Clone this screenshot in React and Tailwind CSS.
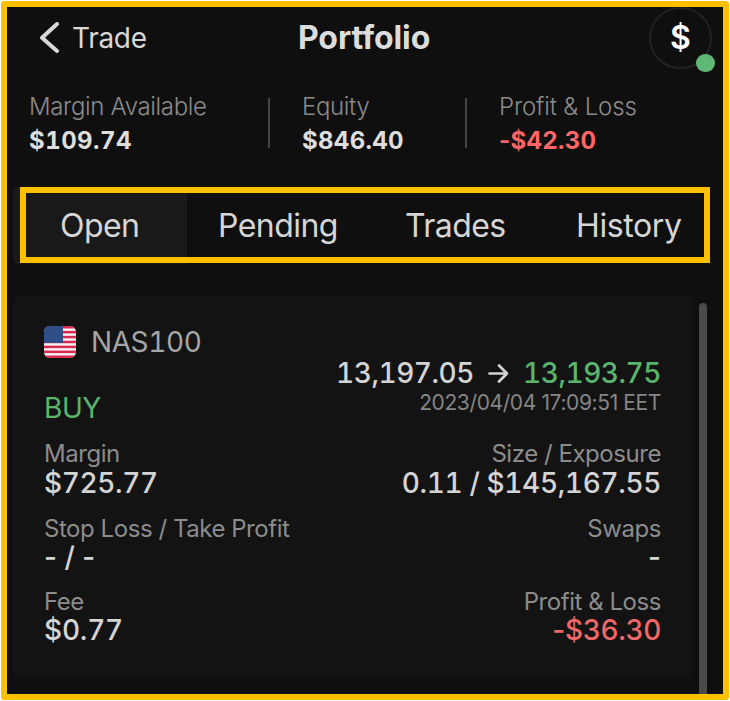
import React from "react";

function Stat({ label, value, negative, className, valueClass }) {
  return (
    <div className={"flex flex-col whitespace-nowrap text-[24px] leading-[34px] " + className}>
      <span className="font-light text-[#8c8c8c]">{label}</span>
      <span className={"font-bold " + valueClass}>
        {negative && "-"}
        <span className="tabular-nums">{value}</span>
      </span>
    </div>
  );
}

const LABEL = "text-[24px] leading-[30px] tracking-[-0.45px] text-[#8c8c8c]";
const VALUE = "text-[28px] font-[450] ";
const NUMBER = "leading-[28px] tracking-[-0.35px] tabular-nums text-[#d4d4d4]";

function Pair({ left, right, className }) {
  return (
    <div className={"flex justify-between whitespace-nowrap " + className}>
      <div className="flex flex-col">
        <span className={LABEL}>{left[0]}</span>
        <span className={VALUE + (left[2] || NUMBER)}>{left[1]}</span>
      </div>
      <div className="flex flex-col items-end">
        <span className={LABEL}>{right[0]}</span>
        <span className={VALUE + (right[2] || NUMBER)}>{right[1]}</span>
      </div>
    </div>
  );
}

function Flag() {
  return (
    <svg width="32" height="32" viewBox="0 0 32 32" className="mt-[26px] shrink-0">
      <clipPath id="flag">
        <rect width="32" height="32" rx="6" />
      </clipPath>
      <g clipPath="url(#flag)">
        <rect width="32" height="32" fill="#f4f0f2" />
        {[0, 1, 2, 3, 4, 5, 6].map((i) => (
          <rect key={i} y={i * 4.92} width="32" height="2.46" fill="#d9284f" />
        ))}
        <rect width="19" height="17" fill="#2f4d87" />
      </g>
    </svg>
  );
}

export default function App() {
  return (
    <div className="h-[701px] w-[730px] overflow-hidden bg-white pt-px pl-px font-['Inter','Liberation_Sans',sans-serif]">
      <div className="h-[699px] w-[728px] overflow-hidden rounded-[3px] border-[6px] border-[#ffc000] bg-[#0f0f0f]">
        <header className="flex h-[62px]">
          <svg width="22" height="32" viewBox="0 0 22 32" className="mt-[15px] ml-[32px] shrink-0" fill="none" stroke="#d8d8d8" strokeWidth="4" strokeLinecap="round" strokeLinejoin="round">
            <path d="M18 2 L3 15.700 L18 29" />
          </svg>
          <span className="mt-[14px] ml-[11px] w-[226px] shrink-0 text-[28px] leading-[34px] tracking-[-0.3px] text-[#d8d8d8]">Trade</span>
          <h1 className="mt-[14px] w-[351px] shrink-0 text-[32px] leading-[34px] font-bold tracking-[-0.1px] text-[#dcdcdc]">Portfolio</h1>
          <div className="relative h-[62px] w-[63px] shrink-0 rounded-full border-2 border-[#222] text-center text-[32px] leading-[58px] font-semibold text-white">
            $
            <span className="absolute top-[45px] left-[45px] h-[18px] w-[19px] rounded-full bg-[#5fb874]" />
          </div>
        </header>
        <section className="mt-[21px] flex h-[67px]">
          <Stat label="Margin Available" value="$109.74" className="w-[239px] pl-[22px] tracking-[-0.35px]" valueClass="tracking-[0.45px] text-[#dedede]" />
          <div className="mt-[8px] ml-[22px] h-[50px] w-[2px] bg-[#444]" />
          <Stat label="Equity" value="$846.40" className="w-[195px] pl-[32px] tracking-[-0.35px]" valueClass="tracking-[0.3px] text-[#dedede]" />
          <div className="mt-[8px] h-[50px] w-[2px] bg-[#444]" />
          <Stat label="Profit & Loss" negative value="$42.30" className="pl-[32px] tracking-[-0.15px]" valueClass="tracking-[0.25px] text-[#ff6666]" />
        </section>
        <div className="mt-[30px] ml-[6px] h-[77px] w-[691px] rounded-[6px] bg-[linear-gradient(to_right,#191919_174px,transparent_174px)] pl-[7px]">
          <nav className="flex h-[76px] w-[690px] border-[6px] border-[#ffc000] text-[32px] leading-[66px] tracking-[-0.55px] text-[#d6d6d6]">
            <span className="h-[64px] w-[161px] bg-[#191919] pl-[34px]">Open</span>
            <span className="w-[187px] pl-[31px]">Pending</span>
            <span className="w-[170px] pl-[31px]">Trades</span>
            <span className="pl-[32px] tracking-[-0.4px]">History</span>
          </nav>
        </div>
        <main className="mt-[32px] flex">
          <article className="ml-[6px] h-[382px] w-[679px] rounded-[6px] bg-[#131313] px-[31px] pt-[4px]">
            <div className="flex h-[139px] justify-between whitespace-nowrap">
              <div className="flex flex-col">
                <div className="flex h-[82px] gap-[15px]">
                  <Flag />
                  <span className="mt-[25px] text-[28px] leading-[34px] tracking-[-0.4px] tabular-nums text-[#a5a5a5]">NAS100</span>
                </div>
                <span className="mt-[9px] text-[28px] leading-[34px] tracking-[-0.4px] text-[#5ab56c]">BUY</span>
              </div>
              <div className="flex flex-col items-end pt-[57px]">
                <div className="flex h-[32px] text-[28px] leading-[32px] font-[450] tracking-[-0.45px] tabular-nums text-[#d4d4d4]">
                  <span>13,197.05</span>
                  <svg width="21" height="20" viewBox="0 0 21 20" className="mx-[14px] mt-[7px]" fill="none" stroke="#d4d4d4" strokeWidth="2.6" strokeLinecap="round" strokeLinejoin="round">
                    <path d="M1.500 9.500H19M11 1.500L19 9.500L11 17.500" />
                  </svg>
                  <span className="text-[#5ab56c]">13,193.75</span>
                </div>
                <span className="text-[21px] leading-[28px] tracking-[-0.38px] text-[#858585]">2023/04/04 17:09:51 EET</span>
              </div>
            </div>
            <Pair className="h-[75px]" left={["Margin", "$725.77"]} right={["Size / Exposure", "0.11 / $145,167.55"]} />
            <Pair
              className="h-[73px]"
              left={["Stop Loss / Take Profit", "- / -", "leading-[26px] text-[#d4d4d4]"]}
              right={["Swaps", "-", "leading-[26px] text-[#d4d4d4]"]}
            />
            <Pair
              left={["Fee", "$0.77", "leading-[26px] tracking-[-0.2px] tabular-nums text-[#d4d4d4]"]}
              right={["Profit & Loss", <>-<span className="tabular-nums">$36.30</span></>, "leading-[26px] tracking-[-0.35px] text-[#f06767]"]}
            />
          </article>
          <div className="mt-[7px] ml-[7px] h-[400px] w-[8px] rounded-t-full bg-[#4b4b4b]" />
        </main>
      </div>
    </div>
  );
}
